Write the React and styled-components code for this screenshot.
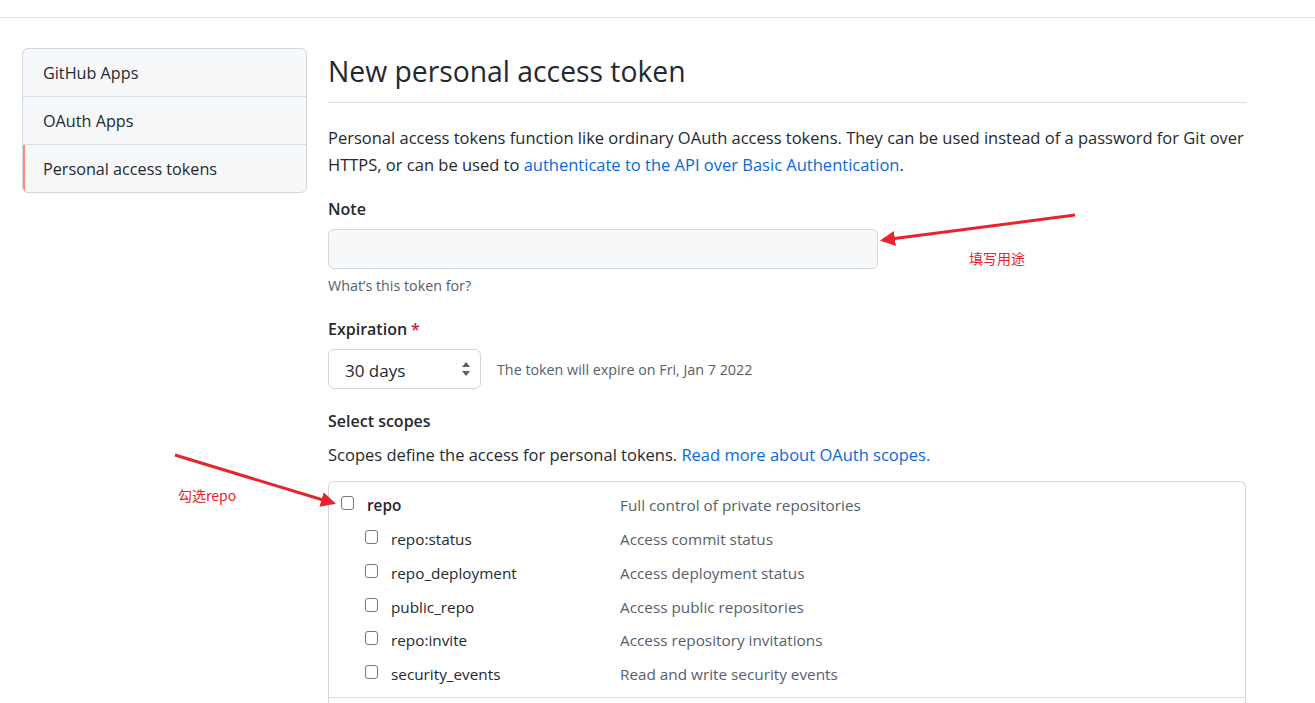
import React from 'react';
import styled, { createGlobalStyle } from 'styled-components';

const Global = createGlobalStyle`
  body {
    margin: 0;
    background: #fff;
    font-family: "Segoe UI", "Open Sans", "Noto Sans", sans-serif;
    color: #24292f;
  }
`;

const TopBar = styled.div`
  height: 17px;
  border-bottom: 1px solid #e1e4e8;
`;

const Page = styled.div`
  display: flex;
  align-items: flex-start;
  gap: 21px;
  padding: 30px 0 0 22px;
  position: relative;
`;

const SideNav = styled.nav`
  width: 285px;
  box-sizing: border-box;
  flex-shrink: 0;
  border: 1px solid #d0d7de;
  border-radius: 6px;
  background: #f6f8fa;
  overflow: hidden;
`;

const NavItem = styled.div`
  height: 47px;
  display: flex;
  align-items: center;
  padding-left: 20px;
  font-size: 16.2px;
  color: #24292f;
  border-top: ${(p) => (p.first ? 'none' : '1px solid #d8dee4')};
  box-shadow: ${(p) => (p.active ? 'inset 2px 0 0 #fd8c73' : 'none')};
`;

const Main = styled.main`
  width: 918px;
`;

const Title = styled.h1`
  margin: 6px 0 0;
  padding-bottom: 13px;
  font-size: 28.3px;
  font-weight: 400;
  line-height: 1.25;
  border-bottom: 1px solid #d8dee4;
`;

const Lead = styled.p`
  margin: 21px 0 0;
  font-size: 16.5px;
  line-height: 27px;
`;

const Link = styled.a`
  color: #0969da;
  text-decoration: none;
`;

const Field = styled.div`
  margin-top: ${(p) => p.top || '22px'};
`;

const Label = styled.div`
  font-size: 16px;
  font-weight: 600;
  line-height: 24px;
`;

const Req = styled.span`
  color: #cf222e;
  margin-left: 4px;
`;

const TextInput = styled.div`
  margin-top: 8px;
  width: 548px;
  height: 38px;
  border: 1px solid #d0d7de;
  border-radius: 6px;
  background: #f6f8fa;
`;

const Hint = styled.div`
  margin-top: ${(p) => p.top || '7px'};
  font-size: 14.3px;
  color: #57606a;
`;

const Row = styled.div`
  display: flex;
  align-items: center;
  gap: 16px;
  margin-top: 8px;
`;

const Select = styled.div`
  width: 151px;
  height: 38px;
  box-sizing: content-box;
  border: 1px solid #d0d7de;
  border-radius: 6px;
  display: flex;
  align-items: center;
  justify-content: space-between;
  font-size: 17px;
  color: #24292f;
`;

const SelectText = styled.span`
  padding-left: 16px;
  padding-top: 3px;
`;

const Arrows = styled.svg`
  margin-right: 9px;
`;

const Desc = styled.div`
  font-size: 16.5px;
  line-height: 24px;
  margin-top: 10px;
`;

const ScopeBox = styled.div`
  margin-top: 14px;
  border: 1px solid #d0d7de;
  border-bottom: none;
  border-radius: 6px 6px 0 0;
  padding: 6px 0 0;
`;

const ScopeRow = styled.div`
  display: grid;
  grid-template-columns: ${(p) => (p.sub ? '26px 229px 1fr' : '26px 253px 1fr')};
  align-items: center;
  height: 33.8px;
  padding-left: ${(p) => (p.sub ? '36px' : '12px')};
  font-size: 15.3px;
  color: #24292f;
`;

const Box = styled.span`
  width: 11px;
  height: 12px;
  border: 1px solid #767676;
  border-radius: 3px;
  background: #fff;
  display: block;
  margin-top: ${(p) => (p.sub ? '-4px' : '-4px')};
`;

const ScopeName = styled.span`
  font-weight: ${(p) => (p.bold ? 600 : 400)};
`;

const ScopeDesc = styled.span`
  color: #57606a;
`;

const Divider = styled.div`
  margin-top: 6px;
  border-top: 1px solid #d8dee4;
  height: 8px;
`;

const Overlay = styled.svg`
  position: absolute;
  left: 0;
  top: 0;
  pointer-events: none;
`;

const Note = styled.span`
  position: absolute;
  left: ${(p) => p.x}px;
  top: ${(p) => p.y}px;
  color: #e8232b;
  font-size: 14px;
  font-family: "Noto Sans CJK SC", "Noto Sans", sans-serif;
`;

const scopes = [
  ['repo:status', 'Access commit status'],
  ['repo_deployment', 'Access deployment status'],
  ['public_repo', 'Access public repositories'],
  ['repo:invite', 'Access repository invitations'],
  ['security_events', 'Read and write security events'],
];

export default function App() {
  return (
    <>
      <Global />
      <TopBar />
      <Page>
        <SideNav>
          <NavItem first>GitHub Apps</NavItem>
          <NavItem>OAuth Apps</NavItem>
          <NavItem active>Personal access tokens</NavItem>
        </SideNav>
        <Main>
          <Title>New personal access token</Title>
          <Lead>
            Personal access tokens function like ordinary OAuth access tokens. They can be used instead of a password for Git over HTTPS, or can be used to{' '}
            <Link>authenticate to the API over Basic Authentication</Link>.
          </Lead>
          <Field top="19px">
            <Label>Note</Label>
            <TextInput />
            <Hint>What’s this token for?</Hint>
          </Field>
          <Field top="22px">
            <Label>
              Expiration<Req>*</Req>
            </Label>
            <Row>
              <Select>
                <SelectText>30 days</SelectText>
                <Arrows width="10" height="16" viewBox="0 0 10 16">
                  <path d="M5 1 L9 6 H1 Z" fill="#57606a" />
                  <path d="M5 15 L9 10 H1 Z" fill="#57606a" />
                </Arrows>
              </Select>
              <Hint as="span" top="0">The token will expire on Fri, Jan 7 2022</Hint>
            </Row>
          </Field>
          <Field top="20px">
            <Label>Select scopes</Label>
            <Desc>
              Scopes define the access for personal tokens. <Link>Read more about OAuth scopes.</Link>
            </Desc>
            <ScopeBox>
              <ScopeRow>
                <Box />
                <ScopeName bold>repo</ScopeName>
                <ScopeDesc>Full control of private repositories</ScopeDesc>
              </ScopeRow>
              {scopes.map(([n, d]) => (
                <ScopeRow sub key={n}>
                  <Box sub />
                  <ScopeName>{n}</ScopeName>
                  <ScopeDesc>{d}</ScopeDesc>
                </ScopeRow>
              ))}
              <Divider />
            </ScopeBox>
          </Field>
        </Main>
        <Overlay width="1315" height="703">
          <defs>
            <marker id="ah" viewBox="0 0 10 10" refX="8" refY="5" markerWidth="5" markerHeight="5" orient="auto">
              <path d="M0 0 L10 5 L0 10 Z" fill="#e8232b" />
            </marker>
          </defs>
          <line x1="1075" y1="197" x2="883" y2="222" stroke="#e8232b" strokeWidth="3" markerEnd="url(#ah)" />
          <line x1="175" y1="437" x2="333" y2="485" stroke="#e8232b" strokeWidth="3" markerEnd="url(#ah)" />
        </Overlay>
        <Note x={969} y={230}>填写用途</Note>
        <Note x={178} y={467}>勾选repo</Note>
      </Page>
    </>
  );
}
